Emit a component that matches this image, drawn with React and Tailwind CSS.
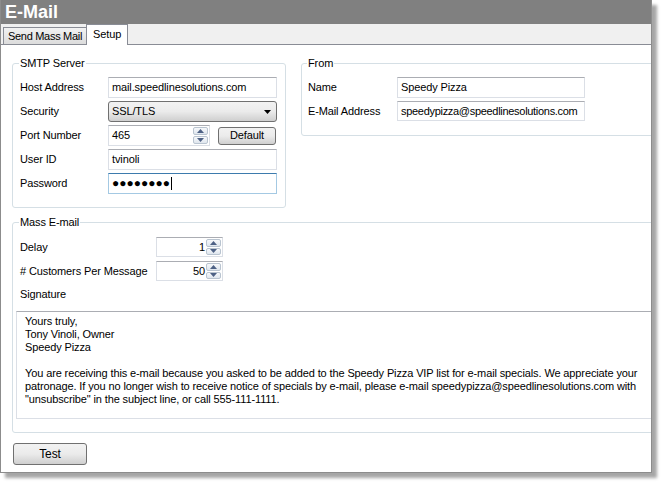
import React from "react";

function TextBox({ className = "", focused = false, children }) {
  return (
    <div
      className={`flex h-full items-center border bg-white pl-[3px] ${
        focused
          ? "border-[#a4c9e3] border-t-[#3d7bad]"
          : "border-[#dbdfe6] border-t-[#abadb3]"
      } ${className}`}
    >
      {children}
    </div>
  );
}

function Arrow({ up }) {
  return (
    <svg width="7" height="4" viewBox="0 0 7 4">
      <path d={up ? "M3.5 0L7 4H0z" : "M0 0H7L3.5 4z"} fill="#4d6185" />
    </svg>
  );
}

function SpinButtons() {
  return (
    <div className="flex h-full w-[15px] flex-col gap-[1px] py-[1px]">
      <div className="flex flex-1 items-center justify-center rounded-[2px] border border-[#b9c4d0] bg-gradient-to-b from-[#f7f9fb] to-[#dfe6ee]">
        <Arrow up />
      </div>
      <div className="flex flex-1 items-center justify-center rounded-[2px] border border-[#b9c4d0] bg-gradient-to-b from-[#f7f9fb] to-[#dfe6ee]">
        <Arrow />
      </div>
    </div>
  );
}

function Row({ label, labelW = "w-[88px]", h = "h-[21px]", children }) {
  return (
    <div className={`flex ${h} items-center`}>
      <div className={`${labelW} shrink-0`}>{label}</div>
      {children}
    </div>
  );
}

export default function App() {
  return (
    <div className="h-[482px] w-[661px] bg-white font-['Liberation_Sans',Arial,sans-serif] text-[11px] leading-[13px] tracking-[-0.12px] text-black">
      <div className="flex h-[473px] w-[652px] flex-col overflow-hidden border-x border-b border-[#8c8c8c] bg-white shadow-[5px_5px_3px_rgba(0,0,0,0.35)]">
        {/* Title */}
        <div className="flex h-[24px] shrink-0 items-center bg-[#808080] pl-[4px] text-[18px] font-bold tracking-[0px] text-white">
          E-Mail
        </div>
        {/* Tabs */}
        <div className="relative flex h-[21px] shrink-0 items-end border-b border-[#898c95] bg-[#f0f0f0] pl-[2px]">
          <div className="mb-[-1px] flex h-[18px] items-center border border-[#898c95] bg-gradient-to-b from-[#f2f2f2] to-[#dcdcdc] px-[4px] tracking-[-0.3px]">
            Send Mass Mail
          </div>
          <div className="mb-[-1px] ml-[-1px] flex h-[21px] items-start border border-b-0 border-[#898c95] bg-white px-[6px] pt-[3px]">
            Setup
          </div>
        </div>

        {/* Content */}
        <div className="flex flex-col pl-[11px]">
          <div className="mt-[12px] flex gap-[15px]">
            <fieldset className="w-[273px] rounded-[3px] border border-[#d5dfe5] pb-[13px] pl-[7px] pr-[8px] pt-[7px]">
              <legend className="ml-[-1px] px-[1px]">SMTP Server</legend>
              <div className="flex flex-col gap-[3px]">
                <Row label="Host Address">
                  <TextBox className="w-[169px]">mail.speedlinesolutions.com</TextBox>
                </Row>
                <Row label="Security">
                  <div className="flex h-full w-[169px] items-center justify-between rounded-[3px] border border-[#707070] bg-gradient-to-b from-[#f2f2f2] via-[#ebebeb] to-[#cfcfcf] pl-[3px] pr-[5px]">
                    <span>SSL/TLS</span>
                    <svg width="7" height="4" viewBox="0 0 7 4">
                      <path d="M0 0H7L3.5 4z" fill="#000" />
                    </svg>
                  </div>
                </Row>
                <Row label="Port Number">
                  <TextBox className="w-[102px] justify-between pr-[1px]">
                    <span>465</span>
                    <SpinButtons />
                  </TextBox>
                  <div className="ml-[8px] flex h-[18px] w-[58px] items-center justify-center rounded-[3px] border border-[#707070] bg-gradient-to-b from-[#f2f2f2] via-[#ebebeb] to-[#cfcfcf]">
                    Default
                  </div>
                </Row>
                <Row label="User ID">
                  <TextBox className="w-[169px]">tvinoli</TextBox>
                </Row>
                <Row label="Password">
                  <TextBox className="w-[169px]" focused>
                    <span className="text-[12px] tracking-[0px]">●●●●●●●●</span>
                    <span className="ml-[1px] h-[13px] w-[1px] bg-black" />
                  </TextBox>
                </Row>
              </div>
            </fieldset>

            <fieldset className="h-[79px] w-[370px] shrink-0 self-start rounded-[3px] border border-[#d5dfe5] pl-[6px] pt-[7px]">
              <legend className="ml-[-1px] px-[1px]">From</legend>
              <div className="flex flex-col gap-[3px]">
                <Row label="Name" labelW="w-[89px]">
                  <TextBox className="w-[188px]">Speedy Pizza</TextBox>
                </Row>
                <Row label="E-Mail Address" labelW="w-[89px]" h="h-[20px]">
                  <TextBox className="w-[188px] tracking-[-0.3px]">speedypizza@speedlinesolutions.com</TextBox>
                </Row>
              </div>
            </fieldset>
          </div>

          <fieldset className="mt-[8px] w-[660px] rounded-[3px] border border-[#d5dfe5] pb-[13px] pl-[7px] pt-[8px]">
            <legend className="ml-[-1px] px-[1px]">Mass E-mail</legend>
            <div className="flex flex-col gap-[4px]">
              <Row label="Delay" labelW="w-[136px]" h="h-[20px]">
                <TextBox className="w-[67px] justify-end pr-[1px]">
                  <span className="mr-[1px]">1</span>
                  <SpinButtons />
                </TextBox>
              </Row>
              <Row label="# Customers Per Message" labelW="w-[136px]" h="h-[20px]">
                <TextBox className="w-[67px] justify-end pr-[1px]">
                  <span className="mr-[1px]">50</span>
                  <SpinButtons />
                </TextBox>
              </Row>
            </div>
            <div className="mt-[7px]">Signature</div>
            <div className="ml-[-4px] mt-[10px] h-[108px] border border-[#dbdfe6] border-t-[#abadb3] pl-[8px] pt-[3px] whitespace-nowrap">
              <div>Yours truly,</div>
              <div>Tony Vinoli, Owner</div>
              <div>Speedy Pizza</div>
              <div className="h-[13px]" />
              <div>
                You are receiving this e-mail because you asked to be added to the Speedy Pizza VIP list for e-mail specials. We appreciate your
              </div>
              <div>
                patronage. If you no longer wish to receive notice of specials by e-mail, please e-mail speedypizza@speedlinesolutions.com with
              </div>
              <div>"unsubscribe" in the subject line, or call 555-111-1111.</div>
            </div>
          </fieldset>

          <div className="ml-[1px] mt-[10px] flex h-[22px] w-[74px] items-center justify-center rounded-[3px] border border-[#707070] bg-gradient-to-b from-[#f2f2f2] via-[#ebebeb] to-[#cfcfcf] text-[12px]">
            Test
          </div>
        </div>
      </div>
    </div>
  );
}
